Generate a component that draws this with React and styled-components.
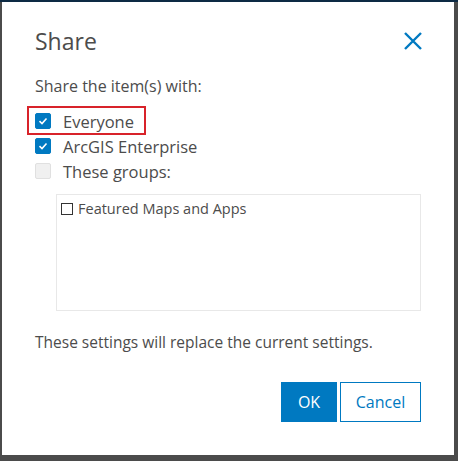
import React from "react";
import styled, { createGlobalStyle } from "styled-components";

const Global = createGlobalStyle`
  html, body { margin: 0; padding: 0; }
  body {
    width: 458px;
    height: 461px;
    background: #4b4b4b;
    font-family: "Open Sans", "Noto Sans", sans-serif;
    overflow: hidden;
  }
`;

const Frame = styled.div`
  width: 458px;
  height: 461px;
  box-sizing: border-box;
  border-top: 2px solid #0d2a44;
  padding: 0 4px 6px 2px;
  display: flex;
`;

const Dialog = styled.div`
  flex: 1;
  background: #fff;
  padding: 27px 33px 0 33px;
  display: flex;
  flex-direction: column;
  color: #4c4c4c;
`;

const Header = styled.div`
  display: flex;
  justify-content: space-between;
  align-items: center;
  height: 24px;
`;

const Title = styled.h2`
  margin: 0;
  font-weight: 400;
  font-size: 23px;
  line-height: 24px;
  color: #4c4c4c;
`;

const Close = styled.button`
  border: 0;
  background: none;
  padding: 0;
  width: 20px;
  height: 20px;
  margin-right: -2px;
  display: flex;
  cursor: pointer;
`;

const Lead = styled.p`
  margin: 24px 0 0 0;
  font-size: 16px;
  line-height: 18px;
`;

const Options = styled.div`
  margin-top: 16px;
  display: flex;
  flex-direction: column;
  gap: 5px;
`;

const Option = styled.label`
  position: relative;
  display: flex;
  align-items: center;
  gap: 12px;
  height: 20px;
  font-size: 16.5px;
`;

const Highlight = styled.span`
  position: absolute;
  left: -8px;
  top: -5px;
  width: 115px;
  height: 25px;
  border: 2px solid #d8232a;
`;

const Box = styled.span`
  width: 16px;
  height: 16px;
  box-sizing: border-box;
  border-radius: 2px;
  display: flex;
  align-items: center;
  justify-content: center;
  background: ${(p) => (p.$checked ? "#0079c1" : "#f0f0f0")};
  border: 1px solid ${(p) => (p.$checked ? "#0079c1" : "#e0e0e0")};
`;

const Groups = styled.div`
  margin: 13px 0 0 21px;
  height: 117px;
  border: 1px solid #e8e8e8;
  box-sizing: border-box;
  padding: 5px 4px;
`;

const GroupItem = styled.label`
  display: flex;
  align-items: center;
  gap: 5px;
  font-size: 14.5px;
  line-height: 18px;
  color: #4c4c4c;
`;

const SmallBox = styled.span`
  width: 12px;
  height: 12px;
  box-sizing: border-box;
  border: 1px solid #333;
  background: #fff;
`;

const Note = styled.p`
  margin: 22px 0 0 0;
  font-size: 15.5px;
  line-height: 18px;
`;

const Actions = styled.div`
  margin-top: 31px;
  display: flex;
  justify-content: flex-end;
  gap: 3px;
`;

const Button = styled.button`
  height: 40px;
  box-sizing: border-box;
  font-family: inherit;
  font-size: 16px;
  padding: 0;
  width: ${(p) => (p.$primary ? "56px" : "81px")};
  border: 1px solid #0079c1;
  background: ${(p) => (p.$primary ? "#0079c1" : "#fff")};
  color: ${(p) => (p.$primary ? "#fff" : "#0079c1")};
  cursor: pointer;
`;

const Check = () => (
  <svg width="12" height="12" viewBox="0 0 12 12">
    <path d="M2.5 6.2 L5 8.5 L9.5 3.5" fill="none" stroke="#fff" strokeWidth="1.6" />
  </svg>
);

export default function App() {
  return (
    <>
      <Global />
      <Frame>
        <Dialog>
          <Header>
            <Title>Share</Title>
            <Close aria-label="Close">
              <svg width="20" height="20" viewBox="0 0 20 20">
                <path d="M2 2 L18 18 M18 2 L2 18" stroke="#0079c1" strokeWidth="2.4" fill="none" />
              </svg>
            </Close>
          </Header>
          <Lead>Share the item(s) with:</Lead>
          <Options>
            <Option>
              <Highlight />
              <Box $checked><Check /></Box>
              Everyone
            </Option>
            <Option>
              <Box $checked><Check /></Box>
              ArcGIS Enterprise
            </Option>
            <Option>
              <Box />
              These groups:
            </Option>
          </Options>
          <Groups>
            <GroupItem>
              <SmallBox />
              Featured Maps and Apps
            </GroupItem>
          </Groups>
          <Note>These settings will replace the current settings.</Note>
          <Actions>
            <Button $primary>OK</Button>
            <Button>Cancel</Button>
          </Actions>
        </Dialog>
      </Frame>
    </>
  );
}
